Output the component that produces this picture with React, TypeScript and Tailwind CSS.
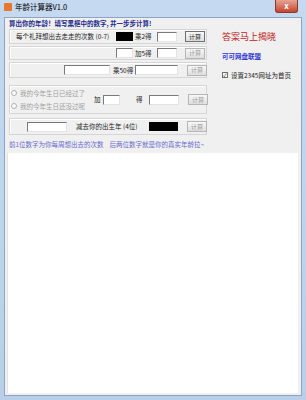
import React from 'react';

const font = { fontFamily: '"SimSun", "Noto Sans CJK SC", "Liberation Sans", sans-serif' };

const Input = ({ w }: { w: string }) => (
  <div className={`${w} shrink-0 h-[10px] bg-white border border-t-[#7a7a7a] border-l-[#7a7a7a] border-r-[#e3e3e3] border-b-[#e3e3e3]`} />
);

const BlackBox = ({ w }: { w: string }) => <div className={`${w} shrink-0 h-[9px] bg-black`} />;

const CalcButton = ({ enabled }: { enabled?: boolean }) => (
  <div
    className={`w-[20px] h-[11px] shrink-0 flex items-center justify-center text-[6px] leading-none border bg-gradient-to-b from-[#f8f8f8] to-[#dedede] ${
      enabled ? 'border-[#707070] text-[#202020]' : 'border-[#b5b5b5] text-[#9a9a9a]'
    }`}
  >
    计算
  </div>
);

const Box = ({ className, children }: { className: string; children: React.ReactNode }) => (
  <div className={`w-[198px] border border-[#d5d5d5] shadow-[inset_1px_1px_0_#ffffff] flex items-center whitespace-nowrap ${className}`}>
    {children}
  </div>
);

const Label = ({ w, className = '', children }: { w: string; className?: string; children: React.ReactNode }) => (
  <span className={`${w} shrink-0 whitespace-nowrap text-[#202020] ${className}`}>{children}</span>
);

export default function App() {
  return (
    <div className="w-[306px] h-[400px] bg-gradient-to-b from-[#c5d9f1] to-[#b9cfe9] text-[6.5px] leading-none overflow-hidden" style={font}>
      {/* title bar */}
      <div className="h-[17px] flex items-start relative">
        <div className="ml-[4px] mt-[3px] w-[8px] h-[8px] bg-[#e8772a] rounded-[1px]" />
        <span className="ml-[3px] mt-[3px] text-[7.5px] text-black whitespace-nowrap">年龄计算器V1.0</span>
        <div className="absolute right-[8px] top-0 w-[23px] h-[13px] rounded-b-[3px] bg-gradient-to-b from-[#e6a394] to-[#c4442c] border border-[#8a3a2c] border-t-0 flex items-center justify-center text-white text-[8px] font-bold">
          x
        </div>
      </div>

      {/* client */}
      <div className="mx-[4px] h-[379px] bg-[#f0f0f0] border border-[#8ea5c2] flex flex-col">
        <div className="flex">
          <div className="ml-[4px] flex flex-col shrink-0">
            <p className="mt-[2px] h-[8px] text-[#1e2a8c] font-semibold whitespace-nowrap">算出你的年龄！填写黑框中的数字, 并一步步计算!</p>

            <Box className="mt-[1px] h-[15px]">
              <Label w="w-[100px]" className="ml-[6px]">每个礼拜想出去走走的次数 (0-7)</Label>
              <BlackBox w="w-[17px]" />
              <Label w="w-[22px]" className="ml-[2px]">乘2得</Label>
              <Input w="w-[20px]" />
              <div className="ml-[8px]"><CalcButton enabled /></div>
            </Box>

            <Box className="mt-[2px] h-[14px]">
              <div className="ml-[106px]"><Input w="w-[17px]" /></div>
              <Label w="w-[22px]" className="ml-[2px]">加5得</Label>
              <Input w="w-[20px]" />
              <div className="ml-[8px]"><CalcButton /></div>
            </Box>

            <Box className="mt-[2px] h-[16px]">
              <div className="ml-[54px]"><Input w="w-[46px]" /></div>
              <Label w="w-[22px]" className="ml-[3px]">乘50得</Label>
              <Input w="w-[43px]" />
              <div className="ml-[9px]"><CalcButton /></div>
            </Box>

            <Box className="mt-[7px] h-[29px]">
              <div className="ml-[1px] w-[80px] shrink-0 flex flex-col gap-[6px] text-[#a0a0a0]">
                <div className="flex items-center">
                  <div className="w-[6px] h-[6px] shrink-0 rounded-full border border-[#b0b0b0] bg-white" />
                  <span className="ml-[3px] whitespace-nowrap">我的今年生日已经过了</span>
                </div>
                <div className="flex items-center">
                  <div className="w-[6px] h-[6px] shrink-0 rounded-full border border-[#b0b0b0] bg-white" />
                  <span className="ml-[3px] whitespace-nowrap">我的今年生日还没过呢</span>
                </div>
              </div>
              <Label w="w-[9px]" className="ml-[3px]">加</Label>
              <Input w="w-[17px]" />
              <Label w="w-[13px]" className="ml-[16px]">得</Label>
              <Input w="w-[30px]" />
              <div className="ml-[9px]"><CalcButton /></div>
            </Box>

            <Box className="mt-[4px] h-[17px]">
              <div className="ml-[17px]"><Input w="w-[40px]" /></div>
              <Label w="w-[73px]" className="ml-[9px]">减去你的出生年 (4位)</Label>
              <BlackBox w="w-[29px]" />
              <div className="ml-[9px]"><CalcButton /></div>
            </Box>
          </div>

          <div className="ml-[15px] flex flex-col whitespace-nowrap">
            <span className="mt-[14px] text-[9px] text-[#c01818]">答案马上揭晓</span>
            <span className="mt-[12px] text-[6.5px] font-bold text-[#2c34d0]">可可网盘联盟</span>
            <div className="mt-[12px] flex items-center">
              <div className="w-[6px] h-[6px] border border-[#707070] bg-white flex items-center justify-center text-[5px] text-black">✓</div>
              <span className="ml-[3px] text-[#202020]">设置2345网址为首页</span>
            </div>
          </div>
        </div>

        <p className="ml-[4px] mt-[6px] text-[#6a6ad0] whitespace-nowrap">前1位数字为你每周想出去的次数&nbsp;&nbsp;&nbsp;&nbsp;后两位数字就是你的真实年龄拉~</p>

        <div className="ml-[2px] mr-[3px] mt-[5px] mb-[2px] flex-1 bg-white border-l border-[#e4e4e4]" />
      </div>
    </div>
  );
}
